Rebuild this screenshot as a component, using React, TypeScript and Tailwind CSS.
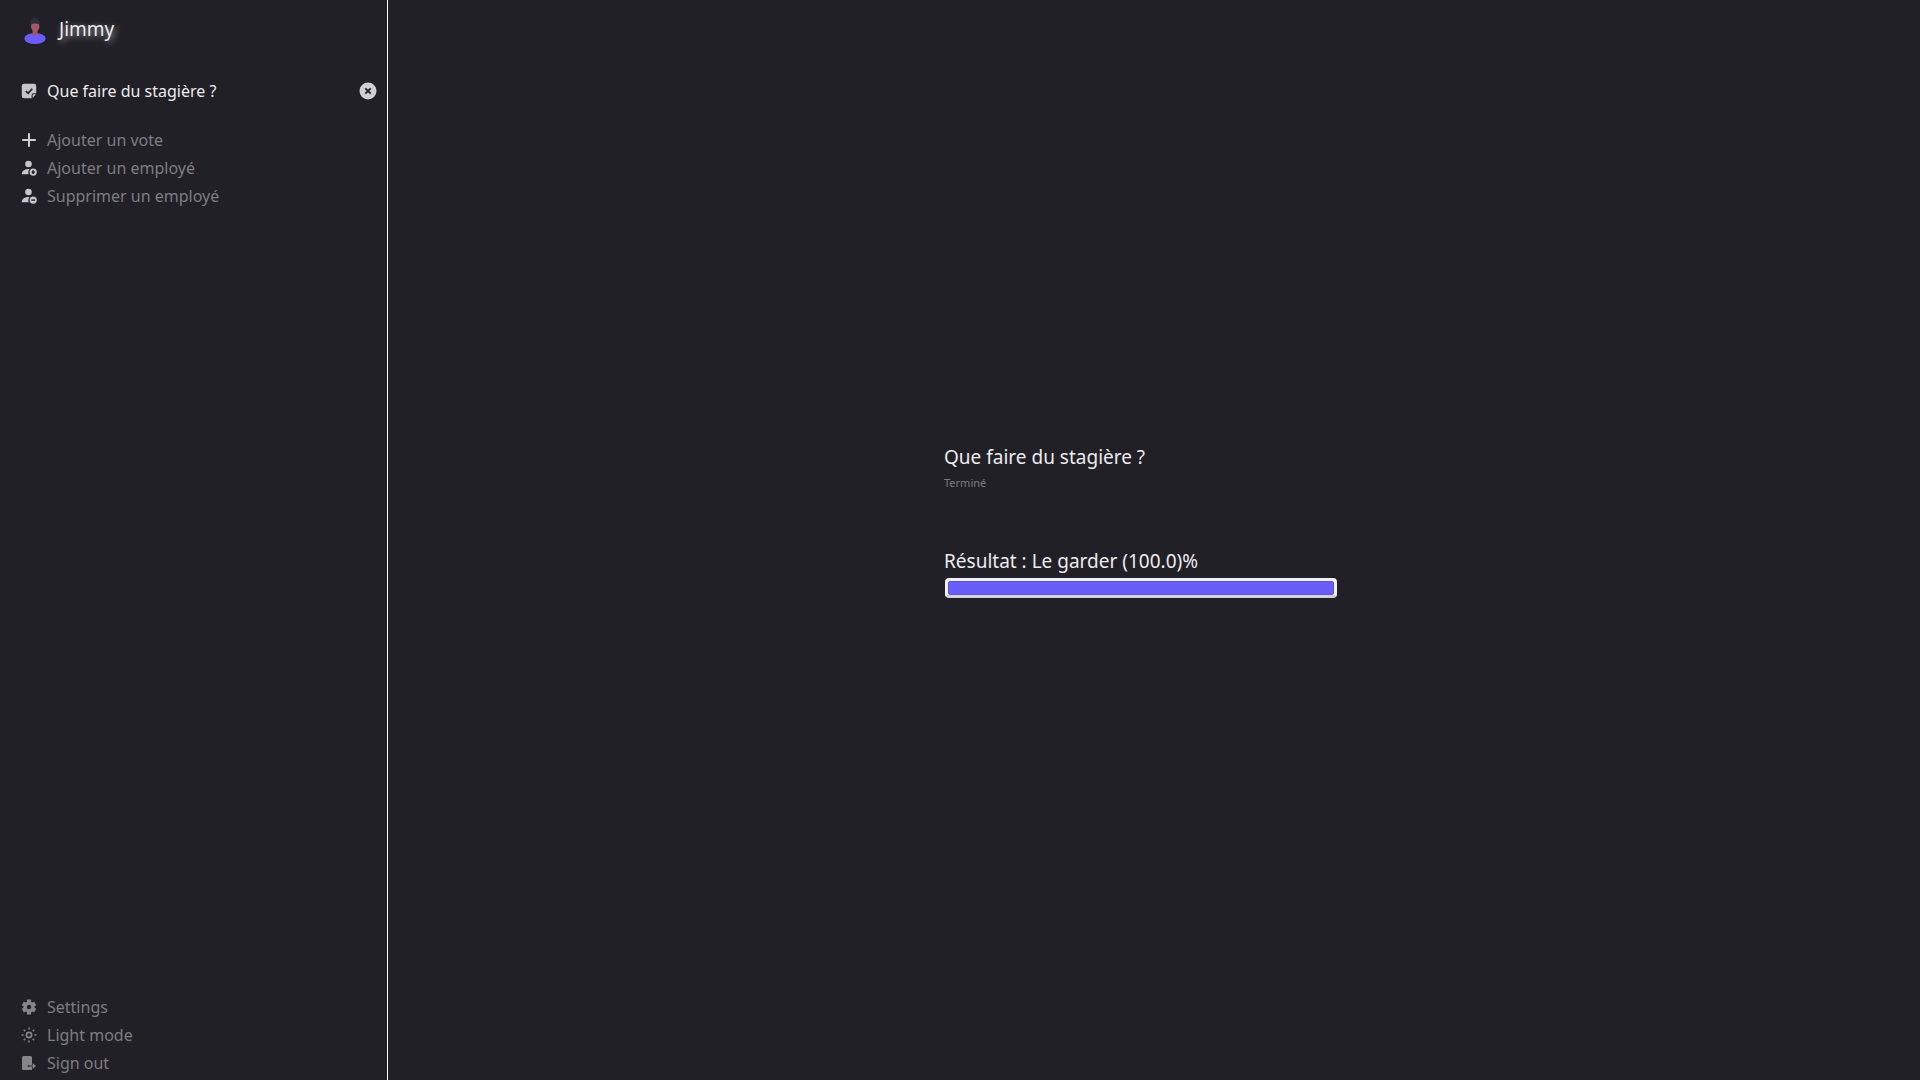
import type { ReactNode } from "react";

function AvatarIcon() {
  return (
    <svg viewBox="0 0 24 28" className="h-7 w-6 shrink-0" aria-hidden="true">
      <ellipse cx="12" cy="22.5" rx="10.6" ry="5.5" fill="#6c5cff" />
      <path d="M9.6 12h5v6.4q-2.5 2.4-5 0z" fill="#a05561" />
      <ellipse cx="12.2" cy="10.5" rx="4.2" ry="5" fill="#a45a68" />
      <path d="M7.4 8.2C7 4 9 3 10 1.8c3-.6 7 .5 6.9 6.400C14 7.200 10 7.200 7.400 8.200z" fill="#302b3e" />
    </svg>
  );
}

function NoteCheckIcon() {
  return (
    <svg viewBox="0 0 16 16" className="size-4" aria-hidden="true">
      <path d="M3 .8h10a2.200 2.200 0 0 1 2.200 2.200v7.200h-2.600a2 2 0 0 0-2 2v3.100H3A2.200 2.200 0 0 1 .8 13.100V3A2.200 2.200 0 0 1 3 .8z" fill="#c6c6c8" />
      <path d="M11.600 15v-2.600a1.200 1.200 0 0 1 1.200-1.200H15z" fill="#c6c6c8" />
      <path d="M4.800 8l2.300 2.300L11.200 5.800" fill="none" stroke="#212026" strokeWidth="1.700" />
    </svg>
  );
}

function PlusIcon() {
  return (
    <svg viewBox="0 0 16 16" className="size-4" aria-hidden="true">
      <path d="M8 1.200v13.600M1.200 8h13.600" stroke="#cfcfd1" strokeWidth="2" />
    </svg>
  );
}

function PersonIcon({ mark }: { mark: "add" | "remove" }) {
  return (
    <svg viewBox="0 0 16 16" className="size-4" aria-hidden="true">
      <circle cx="7.500" cy="4" r="3.300" fill="#c6c6c8" />
      <path d="M.8 14.200C.8 10.800 3.500 9 8.600 9c-1.400 1.400-1.700 3.400-.9 5.200z" fill="#c6c6c8" />
      <circle cx="12.200" cy="12.100" r="3.600" fill="#c6c6c8" />
      {mark === "add" ? (
        <path d="M12.200 10.300v3.600M10.700 12.100h3" stroke="#212026" strokeWidth="1.700" />
      ) : (
        <path d="M10.300 12.100h3.800" stroke="#212026" strokeWidth="1.400" />
      )}
    </svg>
  );
}

function GearIcon() {
  return (
    <svg viewBox="0 0 16 16" className="size-4" aria-hidden="true">
      <g stroke="#85858a" strokeWidth="4.200">
        <path d="M8 .6v14.800M1.800 4.400l12.400 7.200M14.200 4.400l-12.400 7.200" />
      </g>
      <circle cx="8" cy="8" r="5.600" fill="#85858a" />
      <circle cx="8" cy="8" r="2.200" fill="#212026" />
    </svg>
  );
}

function SunIcon() {
  return (
    <svg viewBox="0 0 16 16" className="size-4" fill="none" stroke="#85858a" aria-hidden="true">
      <circle cx="8" cy="8" r="2.600" strokeWidth="1.700" />
      <path
        d="M8 .6v2M8 13.400v2M.6 8h2M13.400 8h2M2.800 2.800l1.400 1.400M11.800 11.800l1.400 1.400M2.800 13.200l1.400-1.400M11.800 4.200l1.400-1.400"
        strokeWidth="1.500"
      />
    </svg>
  );
}

function SignOutIcon() {
  return (
    <svg viewBox="0 0 16 16" className="size-4" fill="#85858a" aria-hidden="true">
      <path d="M2.500 1h7A1.500 1.500 0 0 1 11 2.500V10H6.800v2H11v3H2.500A1.500 1.500 0 0 1 1 13.500v-11A1.500 1.500 0 0 1 2.500 1z" />
      <path d="M7.500 10.400h4.300V8l3.200 3-3.200 3v-2.400H7.500z" />
    </svg>
  );
}

function CloseIcon() {
  return (
    <svg viewBox="0 0 18 18" className="size-[18px]" aria-hidden="true">
      <circle cx="9" cy="9" r="8.500" fill="#d0d0d2" />
      <path d="M6.300 6.300l5.400 5.400M11.700 6.300l-5.400 5.400" stroke="#212026" strokeWidth="1.900" />
    </svg>
  );
}

function NavItem({ icon, label }: { icon: ReactNode; label: string }) {
  return (
    <li>
      <button type="button" className="flex h-7 w-full items-center gap-2.5 text-left text-[#7d7d82]">
        {icon}
        {label}
      </button>
    </li>
  );
}

export default function App() {
  return (
    <div className="flex min-h-screen bg-[#212026] font-['Noto_Sans',sans-serif] text-base text-[#ececee]">
      <aside className="flex w-[388px] shrink-0 flex-col border-r border-white pt-4 pb-[3px] pl-[21px]">
        <header className="flex h-7 items-center gap-3 pl-0.5">
          <AvatarIcon />
          <h1 className="-mt-0.5 text-[19px] leading-6 [text-shadow:2px_2px_6px_#ffffff90]">Jimmy</h1>
        </header>
        <div className="mt-[33px] flex h-7 items-center justify-between pr-2.5">
          <a href="#vote" className="flex items-center gap-2.5">
            <NoteCheckIcon />
            Que faire du stagière ?
          </a>
          <button type="button" aria-label="Supprimer le vote">
            <CloseIcon />
          </button>
        </div>
        <ul className="mt-[21px]">
          <NavItem icon={<PlusIcon />} label="Ajouter un vote" />
          <NavItem icon={<PersonIcon mark="add" />} label="Ajouter un employé" />
          <NavItem icon={<PersonIcon mark="remove" />} label="Supprimer un employé" />
        </ul>
        <ul className="mt-auto">
          <NavItem icon={<GearIcon />} label="Settings" />
          <NavItem icon={<SunIcon />} label="Light mode" />
          <NavItem icon={<SignOutIcon />} label="Sign out" />
        </ul>
      </aside>
      <main className="flex flex-1 items-center justify-center pr-[26px] pb-10">
        <section className="w-[394px]">
          <h2 className="text-[19px] leading-7">Que faire du stagière ?</h2>
          <p className="mt-1 text-[11px] leading-4 text-[#7d7d82]">Terminé</p>
          <label htmlFor="result" className="mt-14 block text-[19px] leading-7">
            Résultat : Le garder (100.0)%
          </label>
          <progress
            id="result"
            value={100}
            max={100}
            className="mt-[3px] ml-px block h-5 w-[392px] appearance-none rounded-[4px] border-[3px] border-[#f2f0fa] border-b-[#d3d2d8] bg-white [&::-webkit-progress-bar]:bg-[#f2f0fa] [&::-webkit-progress-value]:rounded-[2px] [&::-webkit-progress-value]:border [&::-webkit-progress-value]:border-[#5d55d8] [&::-webkit-progress-value]:bg-[#695df8]"
          />
        </section>
      </main>
    </div>
  );
}
